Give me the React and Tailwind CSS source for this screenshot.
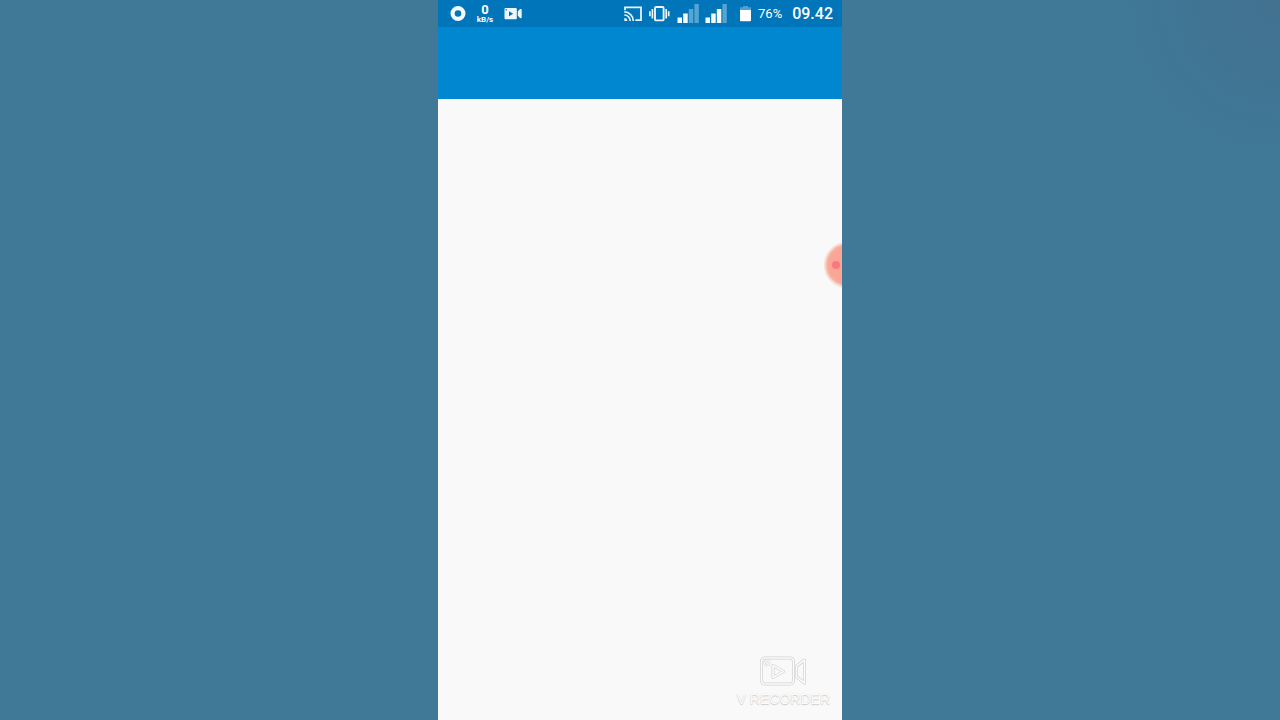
function DiscIcon() {
  return (
    <svg className="size-4 shrink-0" viewBox="0 0 16 16" fill="none" aria-hidden="true">
      <circle cx="8" cy="7.5" r="5.4" stroke="#f4faff" strokeWidth="4.2" />
    </svg>
  );
}

function CameraIcon() {
  return (
    <svg className="h-3 w-[18px] shrink-0" viewBox="0 0 18 12" aria-hidden="true">
      <path
        fill="#eef7fd"
        fillRule="evenodd"
        d="M1.5 0h10.3a1 1 0 0 1 1 1v9.3a1 1 0 0 1-1 1H1.5a1 1 0 0 1-1-1V1a1 1 0 0 1 1-1ZM5 3.2v5L9.2 5.7ZM1.6 1.3v1.3H3V1.3Z"
      />
      <path fill="#eef7fd" d="M13.8 3.6 16 1.1q1.7-.6 1.7.8v7.4q0 1.4-1.7.8L13.8 7.8Z" />
    </svg>
  );
}

function CastIcon() {
  return (
    <svg className="h-4 w-[18px] shrink-0" viewBox="0 0 18 16" fill="none" stroke="#e6f3fb" aria-hidden="true">
      <path strokeWidth="1.8" d="M1 4.2V1.4h16v12.7h-5.6" />
      <path strokeWidth="1.7" d="M.3 5.9a9 9 0 0 1 9 9M.3 9a5.9 5.9 0 0 1 5.9 5.9" />
      <path fill="#e6f3fb" stroke="none" d="M.3 11.9a3 3 0 0 1 3 3h-3Z" />
    </svg>
  );
}

function VibrateIcon() {
  return (
    <svg className="h-4 w-[21px] shrink-0" viewBox="0 0 21 16" fill="none" stroke="#eaf5fc" aria-hidden="true">
      <rect x="6" y="1" width="8.6" height="13.4" rx="1" strokeWidth="1.9" />
      <path strokeWidth="1.7" d="M3.4 3v9.4M17.2 3v9.4M.9 5.2v5M19.7 5.2v5" />
    </svg>
  );
}

function SignalIcon({ label }) {
  return (
    <svg className="h-5 w-[22px] shrink-0" viewBox="0 0 22 20" role="img" aria-label={label}>
      <path fill="#f7fcff" d="M.5 13.5H5V19H.5ZM6.2 9.5h4.5V19H6.2Z" />
      <path fill="#f7fcff" d="M11.8 5h4.5v14h-4.5Z" opacity={label === "SIM 1" ? 0.35 : 1} />
      <path fill="#f7fcff" d="M17.4 0h4.4v19h-4.4Z" opacity=".35" />
    </svg>
  );
}

function BatteryIcon() {
  return (
    <svg className="h-4 w-[11px] shrink-0" viewBox="0 0 11 16" aria-hidden="true">
      <path fill="#4f9fd1" d="M3 0h5v1.3h3V5H0V1.3h3Z" />
      <path fill="#fff" d="M0 4h11v10.5q0 .8-1 .8H1q-1 0-1-.8Z" />
    </svg>
  );
}

function StatusBar() {
  return (
    <header className="flex h-[27px] items-center justify-between bg-[#0075b9] pl-3 pr-[9px] text-white">
      <div className="flex items-center gap-2.5">
        <DiscIcon />
        <div className="flex w-[18px] flex-col items-center font-bold">
          <span className="text-[13px] leading-[12px]">0</span>
          <span className="text-[8px] leading-[8px]">kB/s</span>
        </div>
        <CameraIcon />
      </div>
      <div className="flex items-center gap-2.5">
        <div className="flex items-center gap-[7px]">
          <div className="mr-1.5 flex items-center gap-[7px]">
            <CastIcon />
            <VibrateIcon />
            <div className="flex gap-1.5">
              <SignalIcon label="SIM 1" />
              <SignalIcon label="SIM 2" />
            </div>
          </div>
          <BatteryIcon />
          <span className="text-[13px] leading-4">76%</span>
        </div>
        <time className="text-[16px] font-medium leading-4">09.42</time>
      </div>
    </header>
  );
}

function Watermark() {
  return (
    <div className="absolute bottom-[13px] right-3 flex flex-col items-center gap-1">
      <svg className="h-8 w-12" viewBox="0 0 48 32" fill="none" strokeLinejoin="round" aria-hidden="true">
        <g stroke="#d2d2d2" strokeWidth="3">
          <rect x="2.5" y="3" width="32" height="26" rx="3.5" />
          <path d="M37.5 11.2 45.5 5v23l-8-6.2ZM14 10.5v12L24.5 16.5Z" />
          <circle cx="8" cy="8" r="2.3" strokeWidth="2.4" />
        </g>
        <g stroke="#fcfcfc" strokeWidth="1.6">
          <rect x="2.5" y="3" width="32" height="26" rx="3.5" />
          <path d="M37.5 11.2 45.5 5v23l-8-6.2ZM14 10.5v12L24.5 16.5Z" />
          <circle cx="8" cy="8" r="2.3" strokeWidth="1.2" />
        </g>
      </svg>
      <span className="font-['Liberation_Sans',Arial,sans-serif] text-[14px] leading-4 text-[#fcfcfc] [text-shadow:0_1px_1px_#cccccc,0_0_1px_#d0d0d0]">
        V RECORDER
      </span>
    </div>
  );
}

export default function App() {
  return (
    <div className="flex min-h-screen justify-center bg-[#407998] bg-[radial-gradient(circle_at_top_right,#437190_0px,#417594_90px,#407998_180px)] font-[Roboto,sans-serif]">
      <main className="relative flex w-full max-w-[404px] flex-col overflow-hidden bg-[#f9f9f9]">
        <StatusBar />
        <div className="h-[72px] bg-[#0187d0]" />
        <button
          type="button"
          aria-label="Recording controls"
          className="absolute -right-7 top-[242px] flex size-[46px] items-center justify-center rounded-full border-2 border-[#f8dcd3] bg-[#faa596] shadow-[inset_0_0_3px_1px_#f4c4ab]"
        >
          <span className="mr-[22px] size-2 rounded-full bg-[#f97880]" />
        </button>
        <Watermark />
      </main>
    </div>
  );
}
